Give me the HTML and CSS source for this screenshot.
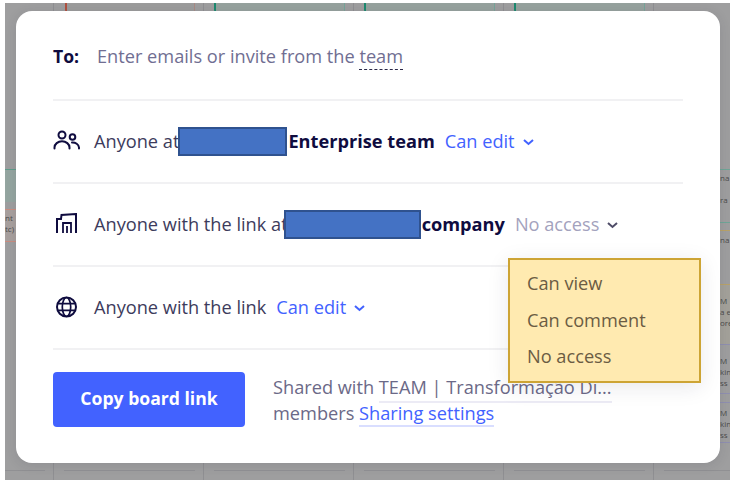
FILE: index.html
```html
<!DOCTYPE html>
<html lang="en">
<head>
    <meta charset="UTF-8">
    <meta name="viewport" content="width=device-width, initial-scale=1.0">
    <title>Share board</title>
    <link rel="stylesheet" href="styles.css">
</head>
<body>
    <div class="backdrop">
        <!-- board cards showing behind the dialog -->
        <div class="card card-red"></div>
        <div class="card card-green card-a"></div>
        <div class="card card-green card-b"></div>
        <div class="card card-green card-c"></div>
        <div class="side-panel panel-left-green"></div>
        <div class="side-panel panel-left-red">nt<br>tc)</div>
        <div class="side-panel panel-r1">na<br><br>ra</div>
        <div class="side-panel panel-r2">na</div>
        <div class="side-panel panel-r3">M<br>a e<br>ore</div>
        <div class="side-panel panel-r4">M<br>kin<br>ss</div>
        <div class="side-panel panel-r5">M<br>kin<br>ss</div>
        <div class="bottom-lines"></div>

        <div class="modal">
            <div class="row row-to">
                <span class="to-label">To:</span>
                <span class="to-hint">Enter emails or invite from the <span class="dashed">team</span></span>
            </div>
            <div class="row">
                <svg class="icon" viewBox="0 0 28 22" fill="none" stroke="#0f0c3f" stroke-width="2" stroke-linecap="round">
                    <circle cx="9" cy="5" r="3.5"/>
                    <circle cx="19.5" cy="7" r="2.8"/>
                    <path d="M1.5 18.5v-1a7 5.8 0 0 1 15 0v1"/>
                    <path d="M19 12.5a6.5 5.5 0 0 1 7 5v1"/>
                </svg>
                <span class="text">Anyone at</span><span class="redact redact-a"></span><strong class="name">Enterprise team</strong>
                <span class="perm">Can edit</span>
                <svg class="chev" viewBox="0 0 11 7" fill="none" stroke="#4262ff" stroke-width="2"><path d="M1 1l4.5 4L10 1"/></svg>
            </div>
            <div class="row">
                <svg class="icon" viewBox="0 0 28 22" fill="none" stroke="#0f0c3f" stroke-width="2">
                    <path d="M4 20V6h4l.5-4L23 1v19"/>
                    <path d="M10 20V10h8v10M14 13v7" stroke-width="1.8"/>
                </svg>
                <span class="text">Anyone with the link at</span><span class="redact redact-b"></span><strong class="name">company</strong>
                <span class="perm perm-off">No access</span>
                <svg class="chev" viewBox="0 0 11 7" fill="none" stroke="#4f4d68" stroke-width="2"><path d="M1 1l4.5 4L10 1"/></svg>
            </div>
            <div class="row">
                <svg class="icon" viewBox="0 0 28 22" fill="none" stroke="#0f0c3f" stroke-width="2">
                    <circle cx="13.5" cy="11" r="9.5"/>
                    <ellipse cx="13.5" cy="11" rx="4.2" ry="9.5" stroke-width="1.7"/>
                    <path d="M4.5 7.7h18M4.5 14.3h18" stroke-width="1.7"/>
                </svg>
                <span class="text">Anyone with the link</span>
                <span class="perm">Can edit</span>
                <svg class="chev" viewBox="0 0 11 7" fill="none" stroke="#4262ff" stroke-width="2"><path d="M1 1l4.5 4L10 1"/></svg>
            </div>
            <div class="footer">
                <button class="copy-btn" type="button">Copy board link</button>
                <div class="shared">
                    <div><span class="team-line">Shared with <span class="team-name">TEAM | Transformação Di...</span></span></div>
                    <div>members <a class="settings" href="#">Sharing settings</a></div>
                </div>
            </div>
            <div class="note">
                <div>Can view</div>
                <div>Can comment</div>
                <div>No access</div>
            </div>
        </div>
    </div>
</body>
</html>
```

FILE: styles.css
```css
html, body {
    margin: 0;
    height: 100%;
    background: #fff;
    overflow: hidden;
}
body {
    font-family: "Open Sans", "Noto Sans", sans-serif;
}

.backdrop {
    position: relative;
    box-sizing: border-box;
    width: 725px;
    height: 477px;
    margin: 3px 0 0 5px;
    padding: 8px 10px 17px 11px;
    background: repeating-linear-gradient(90deg, #8f8f92 0 1px, transparent 1px 150px) 48px 0 / 150px 100% #9e9e9f;
    overflow: hidden;
}

.card {
    position: absolute;
    top: -4px;
    height: 11px;
    border: 1px solid #76a59a;
    border-radius: 2px;
    background: #96a29e;
}
.card-red { left: 60px; width: 127px; background: #9c9c9c; border-color: #a98a84; border-left: 2px solid #b0503f; }
.card-a { left: 209px; width: 128px; border-left: 2px solid #1d8a70; }
.card-b { left: 359px; width: 128px; border-left: 2px solid #1d8a70; }
.card-c { left: 509px; width: 128px; border-left: 2px solid #1d8a70; }

.side-panel {
    position: absolute;
    box-sizing: border-box;
    font-size: 8px;
    line-height: 11px;
    color: #4c4c4c;
    white-space: nowrap;
    overflow: hidden;
}
.panel-left-green { left: 0; top: 166px; width: 11px; height: 33px; background: #94a5a0; border-top: 1px solid #5f9c8b; }
.panel-left-red { left: 0; top: 206px; width: 11px; height: 33px; padding-top: 2px; background: #a8a09e; border-top: 1px solid #c98d80; border-bottom: 1px solid #c98d80; }
.panel-r1 { left: 715px; top: 166px; width: 10px; height: 54px; padding-top: 2px; border-top: 1px solid #6fa597; border-bottom: 1px solid #6fa597; }
.panel-r2 { left: 715px; top: 227px; width: 10px; height: 55px; padding-top: 3px; border-top: 1px solid #b8a269; border-bottom: 1px solid #b8a269; }
.panel-r3 { left: 715px; top: 282px; width: 10px; height: 60px; padding-top: 10px; background: #a3a19a; border-bottom: 1px solid #8f8fb0; }
.panel-r4 { left: 715px; top: 342px; width: 10px; height: 49px; padding-top: 10px; border-bottom: 1px solid #8f8fb0; }
.panel-r5 { left: 715px; top: 399px; width: 10px; height: 41px; padding-top: 4px; border-top: 1px solid #8f8fb0; border-bottom: 1px solid #8f8fb0; }
.bottom-lines {
    position: absolute;
    left: 0;
    right: 0;
    top: 467px;
    height: 1px;
    background: repeating-linear-gradient(90deg, transparent 0 9px, #909093 9px 140px, transparent 140px 150px) 50px 0 / 150px 1px;
}

.modal {
    position: relative;
    box-sizing: border-box;
    width: 704px;
    height: 452px;
    padding: 0 37px;
    background: #fff;
    border-radius: 16px;
    box-shadow: 0 2px 12px rgba(40, 40, 60, 0.12);
}

.row {
    display: flex;
    align-items: center;
    height: 83px;
    padding-bottom: 1px;
    border-bottom: 2px solid #f1f1f3;
    box-sizing: border-box;
    font-size: 18.2px;
    color: #3d3b5c;
    white-space: nowrap;
}
.row-to {
    height: 90px;
    padding: 1px 0 0;
}
.to-label {
    width: 44px;
    font-size: 17.6px;
    font-weight: 700;
    color: #0f0c3f;
}
.to-hint {
    color: #706e92;
}
.dashed {
    padding-bottom: 1px;
    border-bottom: 1px dashed #2a2848;
}

.icon {
    flex: none;
    width: 28px;
    height: 22px;
    margin-right: 13px;
}
.redact {
    flex: none;
    box-sizing: border-box;
    height: 29px;
    background: #4472c4;
    border: 2px solid #2f528f;
}
.redact-a { width: 109px; margin-left: -1px; }
.redact-b { width: 137px; margin-left: -4px; }
.name {
    margin-left: 1px;
    font-weight: 700;
    color: #0f0c3f;
}
.perm {
    margin-left: 10px;
    color: #4262ff;
}
.perm-off { color: #a3a2bd; }
.chev {
    width: 11px;
    height: 7px;
    margin: 2px 0 0 8px;
}

.footer {
    display: flex;
    align-items: center;
    margin-top: 22px;
}
.copy-btn {
    width: 192px;
    height: 55px;
    padding: 0 0 3px;
    border: none;
    border-radius: 4px;
    background: #4262ff;
    color: #fff;
    font: 700 17.6px "Open Sans", sans-serif;
    cursor: pointer;
}
.shared {
    margin-left: 28px;
    font-size: 18.2px;
    line-height: 26px;
    color: #6b6987;
    white-space: nowrap;
}
.team-name {
    padding-bottom: 2px;
    border-bottom: 2px solid #ecebf5;
}
.settings {
    color: #4262ff;
    text-decoration: none;
    border-bottom: 2px solid #d9deff;
}

/* yellow callout added over the dialog */
.note {
    position: absolute;
    left: 492px;
    top: 247px;
    box-sizing: border-box;
    width: 193px;
    height: 125px;
    padding: 5px 17px;
    background: #ffeab0;
    border: 2px solid #cda434;
    box-shadow: 0 4px 20px rgba(30, 30, 60, 0.1);
    font-size: 18.2px;
    line-height: 36.5px;
    color: #6b5c43;
}
```
